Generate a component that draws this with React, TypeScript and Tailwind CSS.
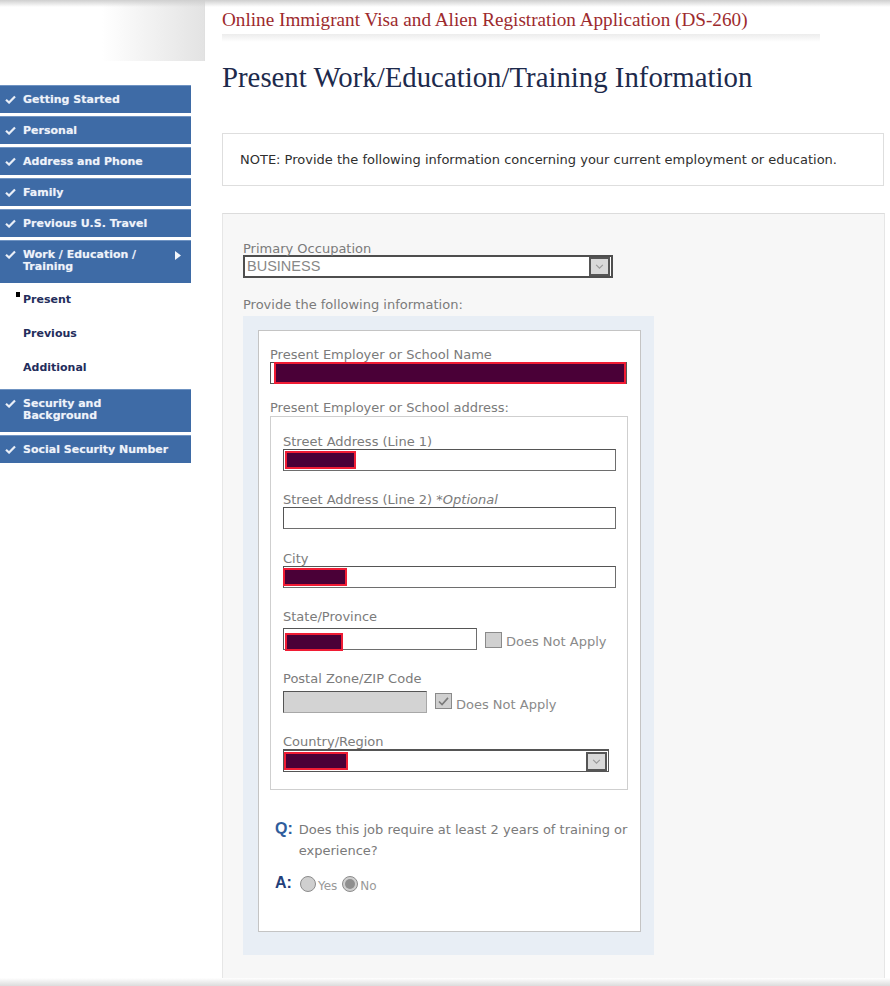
import { Fragment } from "react";

type NavItemProps = {
  label: string;
  lines?: number;
  arrow?: boolean;
};

function CheckMark() {
  return (
    <svg viewBox="0 0 12 10" className="w-[11px] h-[9px] shrink-0 mt-[1px]">
      <path d="M1 5.2 L4.4 8.4 L11 1.6" fill="none" stroke="#e9eef7" strokeWidth="2.4" />
    </svg>
  );
}

function NavItem({ label, lines = 1, arrow }: NavItemProps) {
  return (
    <div
      className={`bg-[#3e6ba6] border-t border-[#6f93c2] flex items-start gap-[7px] pl-[5px] pr-[8px] text-[#eef2f9] font-bold text-[11px] leading-[12px] ${
        lines === 2 ? "h-[43px] pt-[8px]" : "h-[28px] pt-[8px]"
      }`}
      style={{ textShadow: "0 0 1px rgba(255,255,255,0.4)" }}
    >
      <CheckMark />
      <span className="flex-1 whitespace-pre-line">{label}</span>
      {arrow && (
        <svg viewBox="0 0 6 9" className="w-[6px] h-[9px] mt-[2px] mr-[2px]">
          <path d="M0 0 L6 4.5 L0 9 Z" fill="#f2f5fa" />
        </svg>
      )}
    </div>
  );
}

function SubItem({ label, active }: { label: string; active?: boolean }) {
  return (
    <div className="h-[34px] flex items-center pl-[23px] relative text-[11px] font-bold text-[#232d5c]">
      {active && <span className="absolute left-[16px] top-[9px] w-[4px] h-[5px] bg-black" />}
      {label}
    </div>
  );
}

function Redact({ w }: { w: number }) {
  return (
    <div
      className="h-[18px] bg-[#4a0037] border-[2px] border-[#f01c34]"
      style={{ width: w }}
    />
  );
}

function Label({ children }: { children: React.ReactNode }) {
  return <div className="text-[13px] leading-[14px] text-[#7b7b7b]">{children}</div>;
}

function TextBox({
  w,
  children,
  gray,
}: {
  w: number;
  children?: React.ReactNode;
  gray?: boolean;
}) {
  return (
    <div
      className={`h-[22px] border border-[#6e6e6e] border-t-[#555] border-l-[#555] flex items-center px-[1px] ${
        gray ? "bg-[#d3d3d3] border-[#a8a8a8]" : "bg-white"
      }`}
      style={{ width: w }}
    >
      {children}
    </div>
  );
}

function DropBtn() {
  return (
    <div className="w-[21px] h-[19px] bg-[#d9d9d9] border-[2px] border-[#555] flex items-center justify-center">
      <svg viewBox="0 0 10 6" className="w-[9px] h-[5px]">
        <path d="M1 1 L5 5 L9 1" fill="none" stroke="#9a9a9a" strokeWidth="1.4" />
      </svg>
    </div>
  );
}

function CheckBox({ checked }: { checked?: boolean }) {
  return (
    <div className="w-[17px] h-[16px] bg-[#d0d0d0] border border-[#8a8a8a] flex items-center justify-center">
      {checked && (
        <svg viewBox="0 0 12 10" className="w-[11px] h-[9px]">
          <path d="M1 5 L4.4 8.4 L11 1" fill="none" stroke="#7a7a7a" strokeWidth="1.8" />
        </svg>
      )}
    </div>
  );
}

function Radio({ checked }: { checked?: boolean }) {
  return (
    <div className="w-[16px] h-[16px] rounded-full bg-[#cfcfcf] border border-[#8c8c8c] flex items-center justify-center">
      {checked && <div className="w-[10px] h-[10px] rounded-full bg-[#8f8f8f]" />}
    </div>
  );
}

export default function App() {
  const navTop = [
    "Getting Started",
    "Personal",
    "Address and Phone",
    "Family",
    "Previous U.S. Travel",
  ];

  return (
    <div className="w-[890px] h-[986px] bg-white relative overflow-hidden font-['DejaVu_Sans',sans-serif]">
      <div className="absolute top-0 left-0 right-0 h-[7px] bg-gradient-to-b from-[#cfcfcf] to-transparent z-10" />

      <div className="flex">
        <div className="w-[205px] shrink-0">
          <div className="h-[61px] bg-gradient-to-r from-white via-white to-[#e3e3e3] border-r border-[#e0e0e0]" />
          <nav className="mt-[24px] w-[191px] font-['DejaVu_Sans',sans-serif]">
            {navTop.map((item) => (
              <Fragment key={item}>
                <NavItem label={item} />
                <div className="h-[3px]" />
              </Fragment>
            ))}
            <NavItem label={"Work / Education /\nTraining"} lines={2} arrow />
            <SubItem label="Present" active />
            <SubItem label="Previous" />
            <SubItem label="Additional" />
            <div className="h-[4px]" />
            <NavItem label={"Security and\nBackground"} lines={2} />
            <div className="h-[3px]" />
            <NavItem label="Social Security Number" />
          </nav>
        </div>

        <main className="pl-[17px] flex-1 pr-[5px]">
          <div className="pt-[8px] text-[19.2px] leading-[24px] text-[#9d2a2d] font-['Liberation_Serif',serif]">
            Online Immigrant Visa and Alien Registration Application (DS-260)
          </div>
          <div className="w-[598px] h-[8px] mt-[2px] bg-gradient-to-b from-[#ececec] to-white" />
          <h1 className="mt-[19px] text-[28.8px] leading-[32px] text-[#1d2a4c] font-['Liberation_Serif',serif]">
            Present Work/Education/Training Information
          </h1>

          <div className="mt-[40px] w-[662px] h-[53px] border border-[#dedede] flex items-center pl-[17px] text-[13px] text-[#2f2f2f]">
            NOTE: Provide the following information concerning your current employment or education.
          </div>

          <section className="mt-[27px] w-[663px] h-[768px] bg-[#f7f7f7] border border-[#e6e6e6] border-t-[#dcdcdc] pt-[28px] pl-[20px]">
            <Label>Primary Occupation</Label>
            <div className="-mt-[1px] w-[370px] h-[23px] bg-white border-[2px] border-[#4e4e4e] flex items-center justify-between pl-[2px] pr-[1px]">
              <span className="text-[14.5px] text-[#888] font-['Liberation_Sans',Arial,sans-serif]">BUSINESS</span>
              <DropBtn />
            </div>

            <div className="mt-[20px]">
              <Label>Provide the following information:</Label>
            </div>

            <div className="mt-[4px] w-[411px] h-[639px] bg-[#e8eef5] pt-[14px] pl-[15px]">
              <div className="w-[383px] h-[602px] bg-white border border-[#c4c4c4] pt-[17px] pl-[11px]">
                <Label>Present Employer or School Name</Label>
                <div className="w-[357px] h-[22px] border border-[#555] pl-[3px] flex items-center">
                  <div className="w-[354px] h-[22px] bg-[#4a0037] border-[2px] border-[#f01c34]" />
                </div>

                <div className="mt-[17px]">
                  <Label>Present Employer or School address:</Label>
                </div>
                <div className="mt-[1px] w-[358px] h-[374px] border border-[#cfcfcf] pt-[18px] pl-[12px]">
                  <Label>Street Address (Line 1)</Label>
                  <TextBox w={333}>
                    <Redact w={71} />
                  </TextBox>

                  <div className="mt-[22px]">
                    <Label>
                      Street Address (Line 2) <span className="italic">*Optional</span>
                    </Label>
                  </div>
                  <TextBox w={333} />

                  <div className="mt-[23px]">
                    <Label>City</Label>
                  </div>
                  <TextBox w={333}>
                    <div className="-ml-[2px]">
                      <Redact w={64} />
                    </div>
                  </TextBox>

                  <div className="mt-[22px]">
                    <Label>State/Province</Label>
                  </div>
                  <div className="flex items-start gap-[8px] mt-[4px]">
                    <TextBox w={194}>
                      <div className="mt-[6px]">
                        <Redact w={58} />
                      </div>
                    </TextBox>
                    <div className="flex items-center gap-[4px]">
                      <CheckBox />
                      <span className="text-[13px] text-[#8a8a8a] mt-[4px]">Does Not Apply</span>
                    </div>
                  </div>

                  <div className="mt-[20px]">
                    <Label>Postal Zone/ZIP Code</Label>
                  </div>
                  <div className="flex items-start gap-[8px] mt-[5px]">
                    <TextBox w={144} gray />
                    <div className="flex items-center gap-[4px] -mt-[2px]">
                      <CheckBox checked />
                      <span className="text-[13px] text-[#8a8a8a] mt-[6px]">Does Not Apply</span>
                    </div>
                  </div>

                  <div className="mt-[21px]">
                    <Label>Country/Region</Label>
                  </div>
                  <div className="w-[326px] h-[23px] bg-white border border-[#555] border-t-[2px] flex items-center justify-between pr-[1px]">
                    <Redact w={64} />
                    <DropBtn />
                  </div>
                </div>

                <div className="mt-[30px] flex gap-[6px] pl-[5px]">
                  <span className="text-[16px] leading-[18px] font-bold text-[#2f5d9c] font-['Liberation_Sans',Arial,sans-serif]">Q:</span>
                  <p className="text-[13px] leading-[21px] text-[#7a7a7a] -mt-[1px]">
                    Does this job require at least 2 years of training or
                    <br />
                    experience?
                  </p>
                </div>
                <div className="mt-[9px] flex items-center gap-[8px] pl-[5px]">
                  <span className="text-[16px] leading-[18px] font-bold text-[#23407a] font-['Liberation_Sans',Arial,sans-serif]">A:</span>
                  <div className="flex items-center gap-[2px] mt-[3px]">
                    <Radio />
                    <span className="text-[12px] text-[#999] mt-[4px] mr-[3px]">Yes</span>
                    <Radio checked />
                    <span className="text-[12px] text-[#999] mt-[4px]">No</span>
                  </div>
                </div>
              </div>
            </div>
          </section>
        </main>
      </div>

      <div className="absolute bottom-0 left-0 right-0 h-[8px] bg-gradient-to-b from-white to-[#dcdcdc]" />
    </div>
  );
}
